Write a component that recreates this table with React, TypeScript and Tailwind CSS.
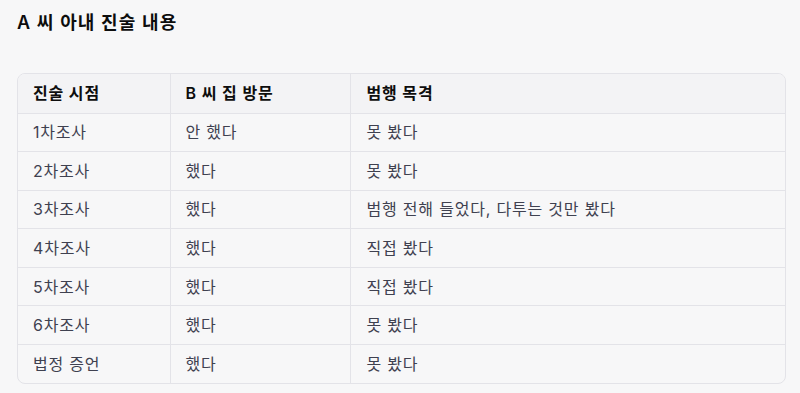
import React from 'react';

const rows: [string, string, string][] = [
  ['1차조사', '안 했다', '못 봤다'],
  ['2차조사', '했다', '못 봤다'],
  ['3차조사', '했다', '범행 전해 들었다, 다투는 것만 봤다'],
  ['4차조사', '했다', '직접 봤다'],
  ['5차조사', '했다', '직접 봤다'],
  ['6차조사', '했다', '못 봤다'],
  ['법정 증언', '했다', '못 봤다'],
];

const App: React.FC = () => {
  return (
    <div
      className="w-[800px] h-[393px] bg-[#f7f7f8] px-[17px] pt-[11px] overflow-hidden"
      style={{ fontFamily: 'Inter, "Noto Sans CJK KR", sans-serif' }}
    >
      <h3 className="text-[18px] tracking-[1.1px] font-semibold text-[#0d0d0d] leading-[24px]">A 씨 아내 진술 내용</h3>

      <div className="mt-[38px] w-[769px] border border-[#e3e3e8] rounded-lg overflow-hidden">
        <table className="w-full text-[16px] tracking-[0.8px] border-collapse">
          <thead className="bg-[#f3f3f5]">
            <tr className="h-[39px] text-left text-[#0d0d0d]">
              <th className="w-[152px] px-[15px] font-semibold border-r border-[#e3e3e8]">진술 시점</th>
              <th className="w-[180px] px-[15px] font-semibold border-r border-[#e3e3e8]">B 씨 집 방문</th>
              <th className="px-[16px] font-semibold">범행 목격</th>
            </tr>
          </thead>
          <tbody>
            {rows.map((r, i) => (
              <tr key={i} className="h-[38.6px] border-t border-[#e3e3e8] text-[#3f4150]">
                <td className="px-[15px] border-r border-[#e3e3e8]">{r[0]}</td>
                <td className="px-[15px] border-r border-[#e3e3e8]">{r[1]}</td>
                <td className="px-[16px]">{r[2]}</td>
              </tr>
            ))}
          </tbody>
        </table>
      </div>
    </div>
  );
};

export default App;
